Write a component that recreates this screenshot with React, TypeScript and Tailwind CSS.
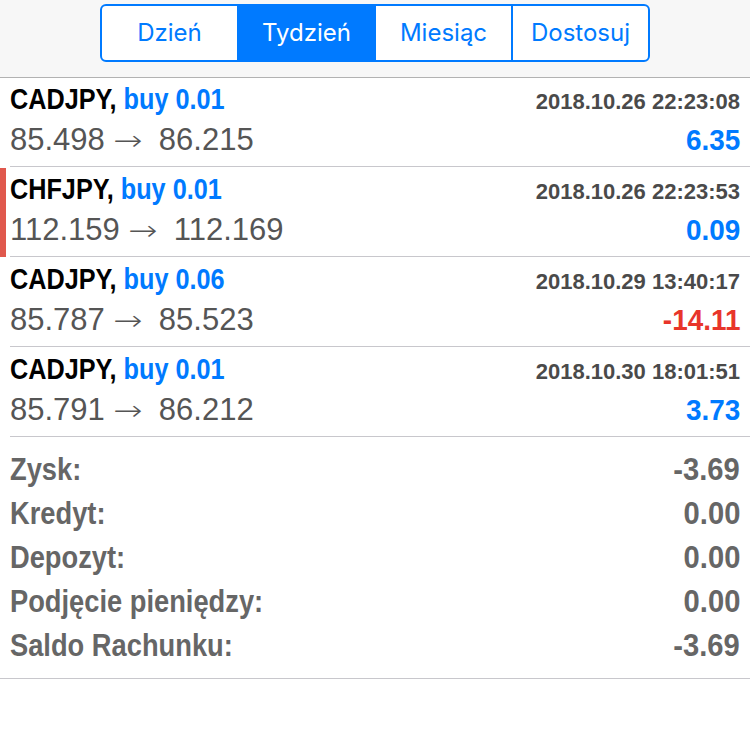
const sans = { fontFamily: '"Liberation Sans", Arial, sans-serif' };

type Deal = {
  symbol: string;
  side: string;
  open: string;
  close: string;
  time: string;
  profit: string;
  loss?: boolean;
  marked?: boolean;
};

const deals: Deal[] = [
  { symbol: "CADJPY", side: "buy 0.01", open: "85.498", close: "86.215", time: "2018.10.26 22:23:08", profit: "6.35" },
  { symbol: "CHFJPY", side: "buy 0.01", open: "112.159", close: "112.169", time: "2018.10.26 22:23:53", profit: "0.09", marked: true },
  { symbol: "CADJPY", side: "buy 0.06", open: "85.787", close: "85.523", time: "2018.10.29 13:40:17", profit: "-14.11", loss: true },
  { symbol: "CADJPY", side: "buy 0.01", open: "85.791", close: "86.212", time: "2018.10.30 18:01:51", profit: "3.73" },
];

const summary = [
  ["Zysk:", "-3.69"],
  ["Kredyt:", "0.00"],
  ["Depozyt:", "0.00"],
  ["Podjęcie pieniędzy:", "0.00"],
  ["Saldo Rachunku:", "-3.69"],
];

const tabs = ["Dzień", "Tydzień", "Miesiąc", "Dostosuj"];

function DealRow({ deal }: { deal: Deal }) {
  return (
    <div className="relative h-[90px] pl-[10px]">
      {deal.marked && <div className="absolute left-0 top-0 h-[89px] w-[6px] bg-[#e0584d]" />}
      <div className="flex h-[89px] flex-col border-b border-[#c8c7cc] pr-[10px] pt-[5px]" style={sans}>
        <div className="flex h-[32px] items-baseline justify-between">
          <div className="origin-left scale-x-[0.87] whitespace-nowrap text-[29px] font-bold leading-[32px]">
            <span className="text-black">{deal.symbol},</span>{" "}
            <span className="text-[#007aff]">{deal.side}</span>
          </div>
          <div className="text-[22px] font-bold leading-[32px] text-[#4a4a4a]">{deal.time}</div>
        </div>
        <div className="mt-[7px] flex h-[36px] items-baseline justify-between">
          <div className="flex items-baseline whitespace-nowrap text-[31px] leading-[36px] text-[#555555]">
            <span>{deal.open}</span>
            <span
              className="ml-[12px] mr-[12px] inline-block w-[30px] scale-x-[1.25] text-[28px] font-extralight"
              style={{ fontFamily: '"DejaVu Sans", sans-serif' }}
            >
              →
            </span>
            <span>{deal.close}</span>
          </div>
          <div
            className={
              "origin-right scale-x-[0.93] text-[30px] font-bold leading-[36px] " +
              (deal.loss ? "text-[#e8352a]" : "text-[#007aff]")
            }
          >
            {deal.profit}
          </div>
        </div>
      </div>
    </div>
  );
}

export default function App() {
  return (
    <div className="h-[755px] w-[750px] bg-white">
      <div className="flex h-[78px] justify-center border-b border-[#b2b2b2] bg-[#f7f7f7] pt-[4px]">
        <div className="flex h-[58px] w-[550px] overflow-hidden rounded-[6px] border-2 border-[#007aff] bg-white">
          {tabs.map((t, i) => (
            <div
              key={t}
              className={
                "flex flex-1 items-center justify-center text-[24px] " +
                (i > 0 ? "border-l-2 border-[#007aff] " : "") +
                (i === 1 ? "bg-[#007aff] text-white" : "text-[#007aff]")
              }
              style={{ fontFamily: 'Inter, "Liberation Sans", sans-serif' }}
            >
              {t}
            </div>
          ))}
        </div>
      </div>
      {deals.map((d, i) => (
        <DealRow key={i} deal={d} />
      ))}
      <div className="flex flex-col border-b border-[#c8c7cc] px-[10px] pb-[10px] pt-[10px]" style={sans}>
        {summary.map(([label, value]) => (
          <div
            key={label}
            className="flex h-[44px] items-center justify-between text-[31px] font-bold leading-[44px] text-[#666666]"
          >
            <span className="origin-left scale-x-[0.88] whitespace-nowrap">{label}</span>
            <span className="origin-right scale-x-[0.94]">{value}</span>
          </div>
        ))}
      </div>
    </div>
  );
}
